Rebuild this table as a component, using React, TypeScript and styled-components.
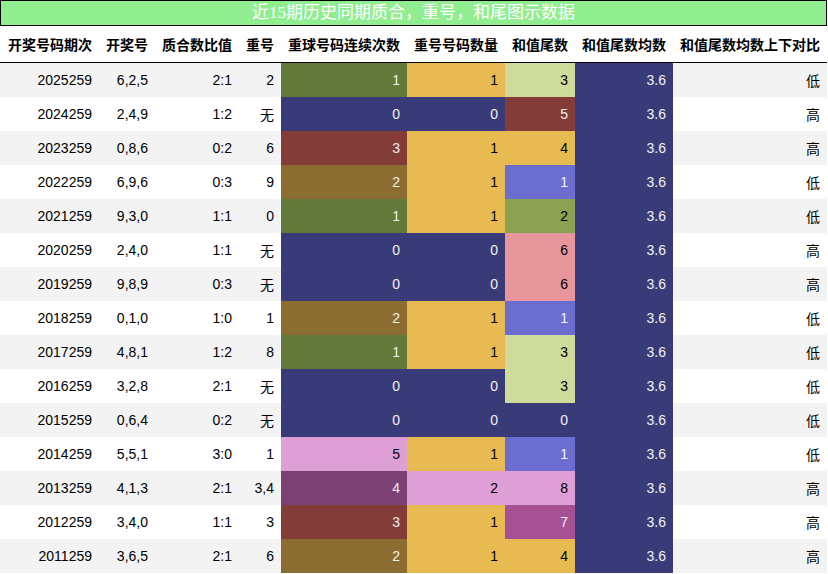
import React from "react";
import styled, { createGlobalStyle } from "styled-components";

const GlobalStyle = createGlobalStyle`
  html, body { margin: 0; padding: 0; background: #ffffff; }
  body { font-family: "Liberation Sans", "Noto Sans CJK SC", sans-serif; }
`;

const COLS = "99px 56px 84px 42px 126px 98px 70px 98px 154px";

const Page = styled.div`
  width: 828px;
  display: flex;
  flex-direction: column;
`;

const Title = styled.div`
  box-sizing: border-box;
  width: 827px;
  height: 26px;
  border: 1px solid #000;
  background: #90ee90;
  color: #ffffff;
  font-family: "Liberation Serif", "Noto Sans CJK SC", serif;
  font-size: 17px;
  line-height: 24px;
  text-align: center;
`;

const HeadRow = styled.div`
  display: grid;
  grid-template-columns: ${COLS};
  height: 36px;
  border-bottom: 1px solid #000;
  width: 827px;
`;

const HeadCell = styled.div`
  display: flex;
  align-items: center;
  justify-content: flex-end;
  padding: 0 7px;
  font-family: "Noto Sans CJK SC", sans-serif;
  font-weight: 700;
  font-size: 14px;
  color: #000;
  white-space: nowrap;
`;

const Row = styled.div<{ $striped: boolean }>`
  display: grid;
  grid-template-columns: ${COLS};
  height: 34px;
  width: 827px;
  background: ${(p) => (p.$striped ? "#f3f3f3" : "#ffffff")};
`;

const Cell = styled.div<{ $bg?: string; $fg?: string; $cjk?: boolean }>`
  display: flex;
  align-items: center;
  justify-content: flex-end;
  padding: 0 7px;
  font-size: 14px;
  font-family: ${(p) =>
    p.$cjk ? `"Noto Sans CJK SC", sans-serif` : `"Liberation Sans", "Noto Sans CJK SC", sans-serif`};
  background: ${(p) => p.$bg || "transparent"};
  color: ${(p) => p.$fg || "#000000"};
  white-space: nowrap;
`;

const C = {
  olive: "#637939",
  navy: "#393b79",
  red: "#843c39",
  brown: "#8c6d31",
  gold: "#e7ba52",
  lgreen: "#cedb9c",
  mgreen: "#8ca252",
  blue: "#6b6ecf",
  pink: "#e7969c",
  lav: "#de9ed6",
  purple: "#7b4173",
  mag: "#a55194",
};

const DARK = new Set([C.olive, C.navy, C.red, C.brown, C.blue, C.purple, C.mag]);
const fgFor = (bg: string) => (DARK.has(bg) ? "#f1f1f1" : "#000000");

type Rec = {
  p: string;
  n: string;
  r: string;
  c: string;
  a: [string, string];
  b: [string, string];
  s: [string, string];
  h: string;
};

const data: Rec[] = [
  { p: "2025259", n: "6,2,5", r: "2:1", c: "2", a: ["1", C.olive], b: ["1", C.gold], s: ["3", C.lgreen], h: "低" },
  { p: "2024259", n: "2,4,9", r: "1:2", c: "无", a: ["0", C.navy], b: ["0", C.navy], s: ["5", C.red], h: "高" },
  { p: "2023259", n: "0,8,6", r: "0:2", c: "6", a: ["3", C.red], b: ["1", C.gold], s: ["4", C.gold], h: "高" },
  { p: "2022259", n: "6,9,6", r: "0:3", c: "9", a: ["2", C.brown], b: ["1", C.gold], s: ["1", C.blue], h: "低" },
  { p: "2021259", n: "9,3,0", r: "1:1", c: "0", a: ["1", C.olive], b: ["1", C.gold], s: ["2", C.mgreen], h: "低" },
  { p: "2020259", n: "2,4,0", r: "1:1", c: "无", a: ["0", C.navy], b: ["0", C.navy], s: ["6", C.pink], h: "高" },
  { p: "2019259", n: "9,8,9", r: "0:3", c: "无", a: ["0", C.navy], b: ["0", C.navy], s: ["6", C.pink], h: "高" },
  { p: "2018259", n: "0,1,0", r: "1:0", c: "1", a: ["2", C.brown], b: ["1", C.gold], s: ["1", C.blue], h: "低" },
  { p: "2017259", n: "4,8,1", r: "1:2", c: "8", a: ["1", C.olive], b: ["1", C.gold], s: ["3", C.lgreen], h: "低" },
  { p: "2016259", n: "3,2,8", r: "2:1", c: "无", a: ["0", C.navy], b: ["0", C.navy], s: ["3", C.lgreen], h: "低" },
  { p: "2015259", n: "0,6,4", r: "0:2", c: "无", a: ["0", C.navy], b: ["0", C.navy], s: ["0", C.navy], h: "低" },
  { p: "2014259", n: "5,5,1", r: "3:0", c: "1", a: ["5", C.lav], b: ["1", C.gold], s: ["1", C.blue], h: "低" },
  { p: "2013259", n: "4,1,3", r: "2:1", c: "3,4", a: ["4", C.purple], b: ["2", C.lav], s: ["8", C.lav], h: "高" },
  { p: "2012259", n: "3,4,0", r: "1:1", c: "3", a: ["3", C.red], b: ["1", C.gold], s: ["7", C.mag], h: "高" },
  { p: "2011259", n: "3,6,5", r: "2:1", c: "6", a: ["2", C.brown], b: ["1", C.gold], s: ["4", C.gold], h: "高" },
];

const headers = [
  "开奖号码期次",
  "开奖号",
  "质合数比值",
  "重号",
  "重球号码连续次数",
  "重号号码数量",
  "和值尾数",
  "和值尾数均数",
  "和值尾数均数上下对比",
];

const ColorCell: React.FC<{ v: [string, string] }> = ({ v }) => (
  <Cell $bg={v[1]} $fg={fgFor(v[1])}>
    {v[0]}
  </Cell>
);

export default function App() {
  return (
    <Page>
      <GlobalStyle />
      <Title>近15期历史同期质合，重号，和尾图示数据</Title>
      <HeadRow>
        {headers.map((h) => (
          <HeadCell key={h}>{h}</HeadCell>
        ))}
      </HeadRow>
      {data.map((d, i) => (
        <Row key={d.p} $striped={i % 2 === 0}>
          <Cell>{d.p}</Cell>
          <Cell>{d.n}</Cell>
          <Cell>{d.r}</Cell>
          <Cell $cjk={d.c === "无"}>{d.c}</Cell>
          <ColorCell v={d.a} />
          <ColorCell v={d.b} />
          <ColorCell v={d.s} />
          <Cell $bg={C.navy} $fg="#f1f1f1">3.6</Cell>
          <Cell $cjk>{d.h}</Cell>
        </Row>
      ))}
    </Page>
  );
}
